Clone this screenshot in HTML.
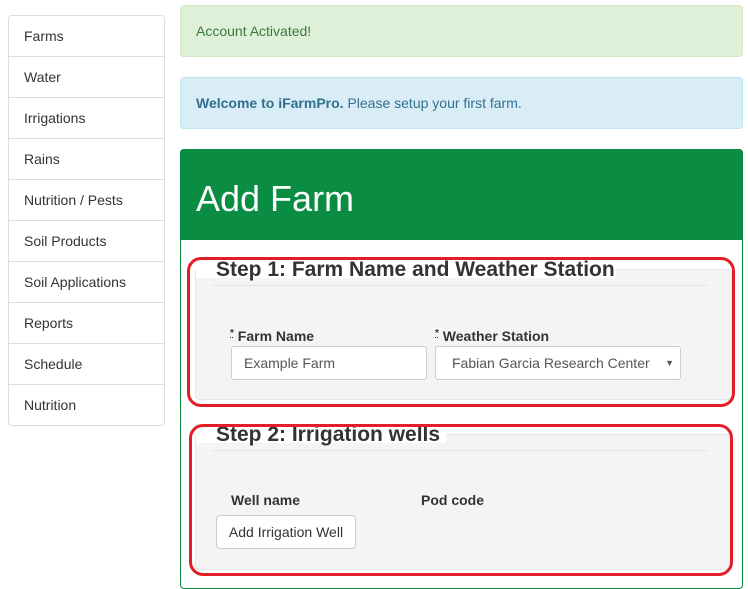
<!DOCTYPE html>
<html><head><style>
body{margin:0;width:748px;height:579px;overflow:hidden;background:#fff;font-family:"Liberation Sans",sans-serif;font-size:14px;color:#333;position:relative}
.a{position:absolute;box-sizing:border-box}
.nav{left:8px;top:15px;width:157px;border:1px solid #ddd;border-radius:4px}
.nav div{height:41px;line-height:41px;padding-left:15px;border-top:1px solid #ddd;box-sizing:border-box}
.nav div:first-child{border-top:none;height:40px}
.lbl{font-weight:bold;font-size:14px;color:#333}
.inp{background:#fff;border:1px solid #ccc;border-radius:3px;height:34px;line-height:32px;padding-left:12px;color:#555}
.red{border:3px solid #e41e26;border-radius:14px}
.fs{background:#f4f4f4;border:1px solid #e6e6e6;border-radius:4px}
.leg{font-weight:bold;font-size:21px;color:#333;white-space:nowrap}
.hr{height:1px;background:#e3e3e3}
</style></head><body>
<div class="a nav">
<div>Farms</div><div>Water</div><div>Irrigations</div><div>Rains</div><div>Nutrition / Pests</div><div>Soil Products</div><div>Soil Applications</div><div>Reports</div><div>Schedule</div><div>Nutrition</div>
</div>
<div class="a" style="left:180px;top:5px;width:563px;height:52px;background:#dff0d8;border:1px solid #d0e9c6;border-radius:4px;color:#3c763d;padding:17px 15px">Account Activated!</div>
<div class="a" style="left:180px;top:77px;width:563px;height:52px;background:#d9edf7;border:1px solid #bce8f1;border-radius:4px;color:#31708f;padding:17px 15px"><b>Welcome to iFarmPro.</b> Please setup your first farm.</div>
<div class="a" style="left:180px;top:149px;width:563px;height:440px;border:1px solid #0a8c42;border-radius:4px"></div>
<div class="a" style="left:180px;top:149px;width:563px;height:91px;background:#0a8c42;border-radius:4px 4px 0 0;color:#fff;font-size:36px;padding:29px 16px">Add Farm</div>

<div class="a fs" style="left:195px;top:269px;width:537px;height:131px"></div>
<div class="a" style="left:196px;top:258px;width:420px;height:20px;background:#fff"></div>
<div class="a leg" style="left:216px;top:258px">Step 1: Farm Name and Weather Station</div>
<div class="a hr" style="left:213px;top:285px;width:494px"></div>
<div class="a lbl" style="left:230px;top:328px"><span style="font-size:10px;text-decoration:underline dotted;vertical-align:top">*</span> Farm Name</div>
<div class="a lbl" style="left:435px;top:328px"><span style="font-size:10px;text-decoration:underline dotted;vertical-align:top">*</span> Weather Station</div>
<div class="a inp" style="left:231px;top:346px;width:196px">Example Farm</div>
<div class="a inp" style="left:435px;top:346px;width:246px;padding-left:16px">Fabian Garcia Research Center<span style="position:absolute;right:6px;font-size:9px">▼</span></div>
<div class="a red" style="left:187px;top:257px;width:548px;height:150px"></div>

<div class="a fs" style="left:195px;top:434px;width:537px;height:136px"></div>
<div class="a" style="left:196px;top:423px;width:250px;height:20px;background:#fff"></div>
<div class="a leg" style="left:216px;top:423px">Step 2: Irrigation wells</div>
<div class="a hr" style="left:213px;top:450px;width:494px"></div>
<div class="a lbl" style="left:231px;top:492px">Well name</div>
<div class="a lbl" style="left:421px;top:492px">Pod code</div>
<div class="a" style="left:216px;top:515px;width:140px;height:34px;background:#fff;border:1px solid #ccc;border-radius:4px;line-height:32px;text-align:center">Add Irrigation Well</div>
<div class="a red" style="left:189px;top:424px;width:544px;height:152px"></div>
</body></html>
